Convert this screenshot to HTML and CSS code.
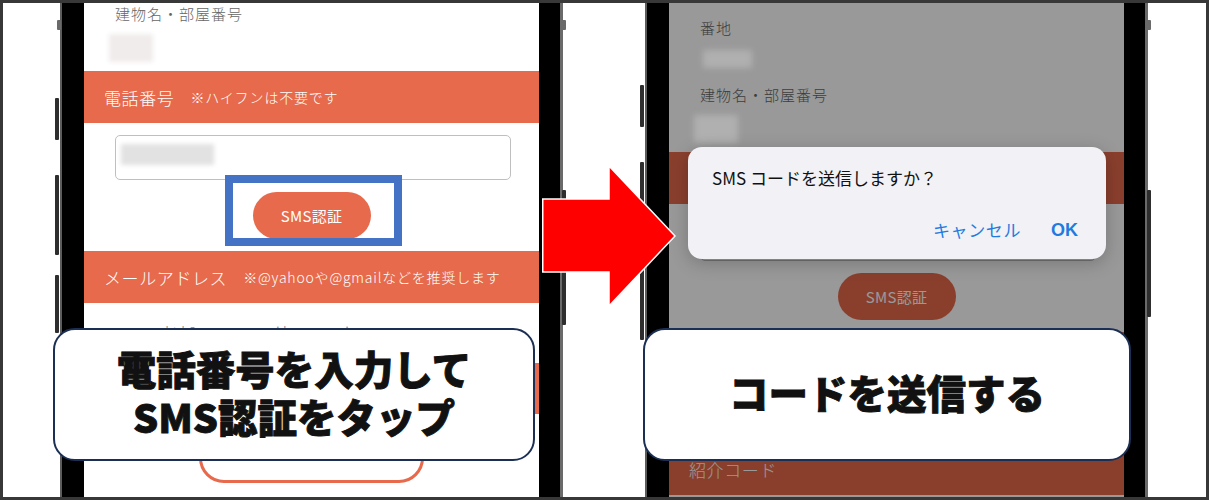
FILE: index.html
```html
<!DOCTYPE html>
<html lang="ja">
<head>
<meta charset="utf-8">
<title>SMS認証の手順</title>
<link rel="stylesheet" href="styles.css">
</head>
<body>
<div class="frame">
  <div class="stage">
    <div class="phone">
      <span class="side sw-l"></span>
      <span class="side vol1-l"></span>
      <span class="side vol2-l"></span>
      <span class="side vol3-l"></span>
      <span class="side sw-r"></span>
      <span class="side pwr-r"></span>
      <div class="screen">
        <div class="content scrolled">
          <div class="label">建物名・部屋番号</div>
          <div class="patch patch-b"></div>
          <div class="band"><span class="band-title">電話番号</span><span class="band-note">※ハイフンは不要です</span></div>
          <div class="input"><span class="input-blur"></span></div>
          <div class="btn-row">
            <span class="sms-btn">SMS認証</span>
            <span class="highlight"></span>
          </div>
          <div class="band"><span class="band-title">メールアドレス</span><span class="band-note">※@yahooや@gmailなどを推奨します</span></div>
          <div class="email">ltl0@@gmail.com.jp</div>
          <div class="band"><span class="band-title">紹介コード</span></div>
          <div class="outline-btn">確認する</div>
        </div>
      </div>
    </div>

    <div class="phone">
      <span class="side vol1-r2"></span>
      <span class="side vol2-r2"></span>
      <span class="side vol3-r2"></span>
      <span class="side sw-r"></span>
      <span class="side pwr-r2"></span>
      <div class="screen">
        <div class="content">
          <div class="label">番地</div>
          <div class="patch patch-a dim"></div>
          <div class="label">建物名・部屋番号</div>
          <div class="patch patch-b dim"></div>
          <div class="band"><span class="band-title">電話番号</span><span class="band-note">※ハイフンは不要です</span></div>
          <div class="input"><span class="input-blur"></span></div>
          <div class="btn-row"><span class="sms-btn">SMS認証</span></div>
          <div class="band"><span class="band-title">メールアドレス</span><span class="band-note">※@yahooや@gmailなどを推奨します</span></div>
          <div class="email">ltl0@@gmail.com.jp</div>
          <div class="band"><span class="band-title">紹介コード</span></div>
        </div>
        <div class="dimmer"></div>
        <div class="dialog">
          <p class="dlg-msg">SMS コードを送信しますか？</p>
          <div class="dlg-actions"><span class="dlg-btn">キャンセル</span><span class="dlg-btn dlg-ok">OK</span></div>
        </div>
      </div>
    </div>

    <svg class="arrow" width="134" height="142" viewBox="0 0 134 142" aria-hidden="true">
      <polygon points="0.75,34 67,34 67,0.9 133,71 67,141.1 67,107 0.75,107" fill="#ff0000" stroke="#ffffff" stroke-width="1.5" stroke-linejoin="miter"/>
    </svg>

    <div class="caption caption-left">電話番号を入力して<br>SMS認証をタップ</div>
    <div class="caption caption-right">コードを送信する</div>
  </div>
</div>
</body>
</html>
```

FILE: styles.css
```css
* { box-sizing: border-box; margin: 0; padding: 0; }

body {
  margin: 0;
  background: #383838;
  font-family: "Noto Sans CJK JP", "Noto Sans", sans-serif;
}

.frame {
  width: 1209px;
  height: 500px;
  border: 3px solid #383838;
  background: #ffffff;
  overflow: hidden;
}

.stage {
  position: relative;
  height: 494px;
  display: flex;
  gap: 82px;
  padding-left: 57px;
}

/* phone body */
.phone {
  position: relative;
  flex: none;
  width: 503px;
  height: 100%;
  background: #000;
  border-left: 2px solid #5c5c5c;
  border-right: 3px solid #6a6a6a;
  padding: 0 21px 0 22px;
}

.side {
  position: absolute;
  width: 4px;
  background: #2e2e2e;
  border-radius: 1px;
}
.sw-l { left: -5px; top: 17px; height: 10px; width: 4px; background: #6a6a6a; }
.vol1-l { left: -7px; top: 95px; height: 42px; }
.vol2-l { left: -7px; top: 172px; height: 80px; }
.vol3-l { left: -7px; top: 272px; height: 58px; }
.sw-r { right: -6px; top: 17px; height: 10px; background: #6a6a6a; }
.pwr-r { right: -6px; top: 187px; height: 135px; }
.vol1-r2 { left: -7px; top: 82px; height: 42px; }
.vol2-r2 { left: -7px; top: 159px; height: 83px; }
.vol3-r2 { left: -7px; top: 259px; height: 78px; }
.pwr-r2 { right: -6px; top: 187px; height: 127px; }

.screen {
  position: relative;
  height: 100%;
  background: #fff;
  overflow: hidden;
}

/* form content */
.content {
  padding-top: 14px;
  font-weight: 300;
}
.content.scrolled { padding-top: 0; }

.label {
  height: 22px;
  line-height: 22px;
  padding-left: 31px;
  font-size: 15px;
  letter-spacing: 1px;
  color: #666;
}

.patch {
  background: #f1ecec;
  filter: blur(2px);
}
.patch-a { margin: 11px 0 16px 34px; width: 49px; height: 18px; }
.patch-b { margin: 9px 0 9px 25px; width: 44px; height: 28px; }
.patch.dim { position: relative; z-index: 3; background: #b0b0b0; filter: blur(3px); }

.band {
  display: flex;
  align-items: center;
  gap: 16px;
  height: 52px;
  padding-left: 20px;
  background: #e66a4b;
  color: #fff;
}
.email + .band { height: 51px; }
.band-title { font-size: 17px; letter-spacing: 0.6px; }
.band-note { font-size: 14px; letter-spacing: 0.8px; }

.input {
  margin: 12px 28px 0 31px;
  height: 45px;
  border: 1.5px solid #bfbfbf;
  border-radius: 5px;
  padding: 8px 5px;
}
.input-blur {
  display: block;
  width: 93px;
  height: 21px;
  background: #e2e2e2;
  filter: blur(2px);
}

.btn-row {
  position: relative;
  display: flex;
  justify-content: center;
  margin: 12px 0;
  height: 47px;
}
.sms-btn {
  display: flex;
  align-items: center;
  justify-content: center;
  width: 118px;
  height: 47px;
  border-radius: 24px;
  background: #e66a4b;
  color: #fff;
  font-size: 15px;
  font-weight: 400;
  letter-spacing: 0.3px;
}
.highlight {
  position: absolute;
  left: 141px;
  top: -17px;
  width: 177px;
  height: 71px;
  border: 8px solid #4472c4;
}

.email {
  height: 60px;
  padding: 18px 0 0 81px;
  line-height: 22px;
  font-size: 16px;
  letter-spacing: 3px;
  color: #888;
}

.outline-btn {
  margin: 19px auto 0;
  width: 225px;
  height: 50px;
  border: 3px solid #e66a4b;
  border-radius: 25px;
  color: #ee9a85;
  font-size: 15px;
  line-height: 22px;
  padding-top: 6px;
  text-align: center;
}

/* dim + dialog */
.dimmer {
  position: absolute;
  inset: 0;
  background: rgba(0, 0, 0, 0.4);
  z-index: 2;
}
.dialog {
  position: absolute;
  left: 19px;
  top: 144px;
  width: 418px;
  height: 112px;
  background: #f1f1f6;
  border-radius: 14px;
  box-shadow: 0 4px 18px rgba(0, 0, 0, 0.22);
  z-index: 4;
}
.dlg-msg {
  padding: 19px 24px 0;
  font-size: 17px;
  line-height: 24px;
  color: #111;
}
.dlg-actions {
  display: flex;
  justify-content: flex-end;
  gap: 30px;
  margin-top: 28px;
  padding-right: 28px;
  font-size: 17px;
  line-height: 24px;
  color: #1f7be0;
}
.dlg-btn { letter-spacing: 0.6px; }
.dlg-ok { font-weight: 700; font-family: "Liberation Sans", "Noto Sans", sans-serif; font-size: 18px; letter-spacing: 0; }

/* overlays: arrow and captions */
.arrow {
  position: absolute;
  left: 539px;
  top: 162px;
  z-index: 6;
}

.caption {
  position: absolute;
  top: 325px;
  height: 133px;
  padding-bottom: 6px;
  display: flex;
  align-items: center;
  justify-content: center;
  text-align: center;
  background: #fff;
  border: 2.5px solid #1b2f55;
  border-radius: 22px;
  font-weight: 900;
  font-size: 39.5px;
  line-height: 48px;
  color: #111;
  -webkit-text-stroke: 0.9px #111;
  z-index: 6;
}
.caption-left { left: 50px; width: 482px; }
.caption-right { left: 640px; width: 488px; }
```
